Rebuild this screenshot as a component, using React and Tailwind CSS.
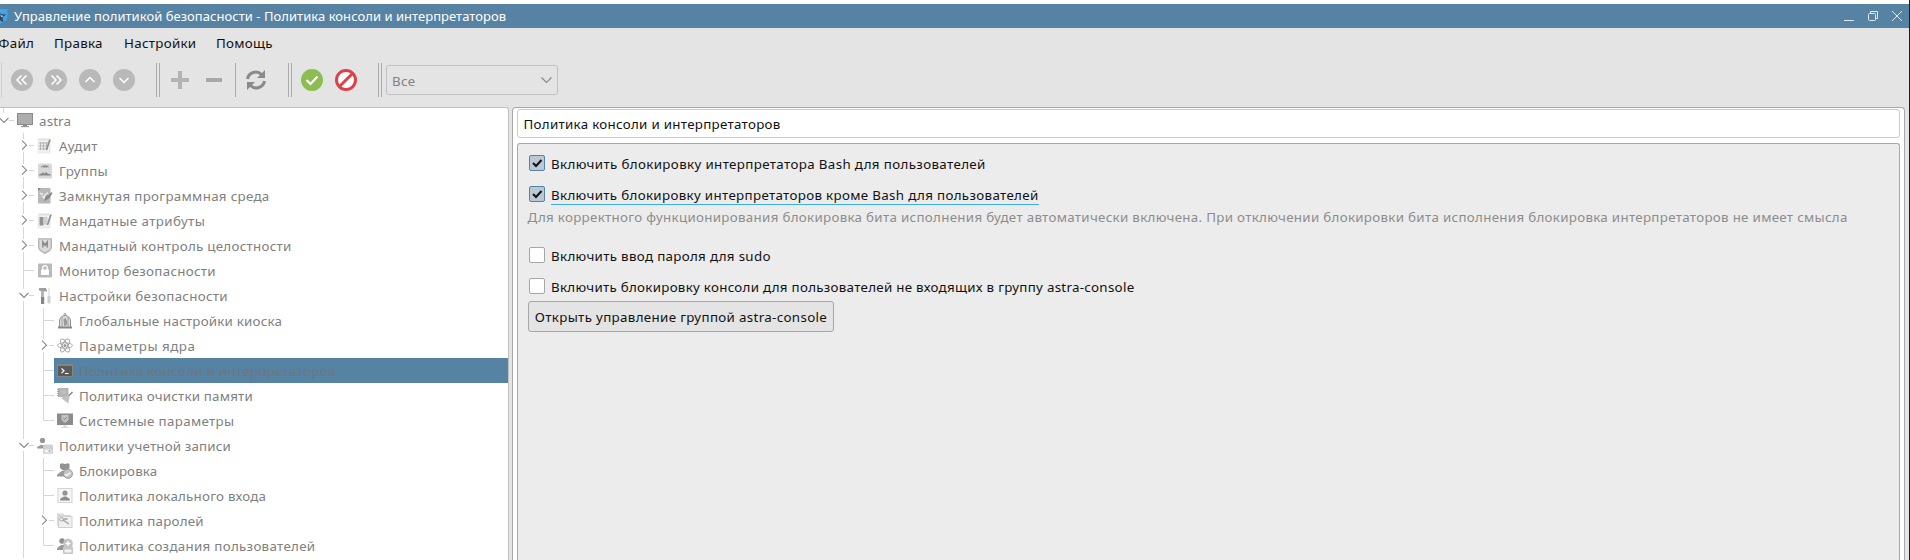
import React from "react";

const I = ({ children }) => (
  <svg width="16" height="16" viewBox="0 0 16 16" className="shrink-0">{children}</svg>
);

const icons = {
  computer: (
    <I><rect x="0" y="0" width="16" height="12" fill="#8a8a8a" /><rect x="1" y="1" width="14" height="10" fill="#adadad" /><rect x="6" y="12" width="4" height="2" fill="#8a8a8a" /><rect x="4" y="13" width="8" height="1.200" fill="#9a9a9a" /></I>
  ),
  audit: (
    <I><rect x="1" y="1" width="12" height="14" rx="1" fill="#f0f0f0" stroke="#e0e0e0" strokeWidth=".6" /><path d="M3 .5v2M5 .5v2M7 .5v2M9 .5v2M11 .5v2" stroke="#d0d0d0" strokeWidth=".8" /><path d="M2 5h9M2 8h9M2 11h7M3.500 4v8M6.500 4v8M9.500 4v7" stroke="#b4b4b4" strokeWidth="1.100" /><path d="M13 1.500L9.500 12" stroke="#8c8c8c" strokeWidth="1.600" /></I>
  ),
  groups: (
    <I><rect x="1" y=".5" width="14" height="15" rx="1.500" fill="#d8d8d8" /><path d="M3.500 4.500c2-3 7-3 9 0l-2-.6-1 1.100-1-1-1.500 1-.8-1z" fill="#8d8d8d" /><path d="M2 12.500c0-1.500 1.300-2 2.300-1.500.700-2 2.500-2 3.200-.3.800-1.900 3-1.600 3.500.3 1.500-.5 2.500.500 3 1.500z" fill="#8a8a8a" /></I>
  ),
  closed: (
    <I><path d="M1 0h12.500v15.500H1z" fill="#b8b8b8" /><path d="M1 0h3L1 3z" fill="#858585" /><path d="M3 5l1.500 1.500L6 5.500M5 8l2 2 1-3 3-2.500" fill="none" stroke="#eee" strokeWidth="1.300" /><path d="M15.500 5l-3 5-5.500 3.500L9 8l3-1 2-3z" fill="#868686" /></I>
  ),
  attrs: (
    <I><rect x="1" y="1" width="12" height="14" rx="1" fill="#f0f0f0" stroke="#e0e0e0" strokeWidth=".6" /><path d="M3 .5v2M5 .5v2M7 .5v2M9 .5v2M11 .5v2" stroke="#d0d0d0" strokeWidth=".8" /><rect x="2.500" y="4" width="4" height="8.500" fill="#939393" /><rect x="6.500" y="4" width="4" height="7.500" fill="#cecece" /><path d="M14 1.500L10.500 12" stroke="#8c8c8c" strokeWidth="1.600" /></I>
  ),
  shield: (
    <I><path d="M1 .2h14V9c0 3.500-4 5.500-7 7-3-1.500-7-3.500-7-7z" fill="#b5b5b5" /><path d="M2.400 1.600h11.200V9c0 2.500-3 4-5.600 5.300C5.400 13 2.400 11.500 2.400 9z" fill="#dadada" /><path d="M5.800 9.500V4L8 7.200 10.200 4v5.500" fill="none" stroke="#858585" strokeWidth="1.400" /></I>
  ),
  lock: (
    <I><rect x="1" y=".5" width="14" height="14" rx="1" fill="#b9b9b9" /><rect x="4" y="6.500" width="8" height="5.500" fill="#fff" /><path d="M5.700 7V5a2.300 2.300 0 0 1 4.600 0V7" fill="none" stroke="#fff" strokeWidth="1.300" /></I>
  ),
  tools: (
    <I><path d="M2 0h7v1.200l1 .3v2H7.200V3H4L2 2.500z" fill="#a0a0a0" /><rect x="4" y="3" width="3" height="7" fill="#b5b5b5" /><rect x="4" y="9" width="3.200" height="7" fill="#868686" /><rect x="11.300" y="0" width="1.400" height="9" fill="#dedede" /><rect x="10.500" y="8" width="3" height="7.500" rx="1.300" fill="#d0d0d0" /></I>
  ),
  kiosk: (
    <I><path d="M2.500 14V8a5.500 5.500 0 0 1 11 0v6" fill="#dcdcdc" stroke="#8f8f8f" /><path d="M5 4v10M11 4v10" stroke="#a0a0a0" /><circle cx="8" cy="1.200" r="1" fill="none" stroke="#8f8f8f" strokeWidth=".8" /><path d="M6.500 6l2-1 1.500 3v4l-3 1z" fill="#999" /><rect x="1" y="13.500" width="14" height="2" fill="#888" /></I>
  ),
  atom: (
    <I><g fill="none" stroke="#a8a8a8" strokeWidth="1"><ellipse cx="8" cy="7.500" rx="7.500" ry="2.700" /><ellipse cx="8" cy="7.500" rx="7.300" ry="2.700" transform="rotate(60 8 7.500)" /><ellipse cx="8" cy="7.500" rx="7.300" ry="2.700" transform="rotate(120 8 7.500)" /></g><circle cx="8" cy="7.500" r="1.500" fill="#999" /></I>
  ),
  terminal: (
    <I><rect x="0" y="1" width="16" height="13" fill="#848484" /><rect x="1" y="3" width="14" height="10" fill="#5a5a5a" /><path d="M4.500 5.500l2.500 2.300-2.500 2.300M8 10.500h3.500" fill="none" stroke="#fff" strokeWidth="1.200" /></I>
  ),
  clean: (
    <I><path d="M1 0h10.500v9H1z" fill="#b4b4b4" /><path d="M0 1.500h2M0 3.500h2M0 5.500h2M0 7.500h2" stroke="#999" strokeWidth=".8" /><path d="M4 3h5M4 5h5" stroke="#cfcfcf" strokeWidth=".8" /><path d="M15.500 4L10.500 9" stroke="#858585" strokeWidth="1.500" /><path d="M4 10l7-3 1.500 2-1 6.500L8 13z" fill="#c2c2c2" /></I>
  ),
  system: (
    <I><rect x="0" y=".5" width="16" height="11.500" fill="#8c8c8c" /><path d="M4.500 2h7v5L8 10 4.500 7z" fill="#c2c2c2" /><path d="M6.300 5.300l1.300 1.300 2.200-2.400" fill="none" stroke="#888" /><path d="M6.500 12h3v2H12v1H4v-1h2.500z" fill="#dcdcdc" /></I>
  ),
  account: (
    <I><circle cx="5.500" cy="2.500" r="2.600" fill="#959595" /><path d="M0 10.500c0-2.500 2.500-2.500 3.700-3.500h3.600c1 .8 2 .8 2.700 1.500v2z" fill="#9a9a9a" /><rect x="6" y="6.500" width="10" height="9.300" rx="1" fill="#d0d0d0" /><rect x="7.500" y="11.500" width="7" height="3" rx="1" fill="#f4f4f4" /><rect x="11.500" y="12" width="2" height="2" fill="#bbb" /></I>
  ),
  block: (
    <I><path d="M3 1l2-.7L8 1l3-.7 1.500.7v4L10 7.500H6L3 5z" fill="#939393" /><path d="M0 13.500C0 10 3 10 4.500 8h6l1 5.500z" fill="#989898" /><circle cx="11" cy="10.800" r="4.500" fill="#c6c6c6" stroke="#9c9c9c" strokeWidth="1" /><path d="M7.500 10.800c2 1.200 4 0 6-2v2c-2 2-4 2.500-5.500 2z" fill="#f4f4f4" /></I>
  ),
  local: (
    <I><rect x="1" y=".5" width="14" height="14" fill="#f6f6f6" stroke="#d4d4d4" /><circle cx="8" cy="5" r="2.600" fill="#949494" /><path d="M3 12.500c0-3 3-3 4-4h2c1 1 4 1 4 4z" fill="#8c8c8c" /></I>
  ),
  passwords: (
    <I><path d="M0 .5h6.500l1 1.500H14v11H0z" fill="#d9d9d9" /><rect x="1.500" y="3.500" width="13.500" height="11" fill="#f0f0f0" stroke="#d0d0d0" /><circle cx="4.500" cy="6.300" r="1.800" fill="none" stroke="#a4a4a4" /><path d="M6 7l6 4M6.500 6h4" stroke="#a0a0a0" strokeWidth="1.400" /></I>
  ),
  create: (
    <I><circle cx="5" cy="3" r="2.700" fill="#8f8f8f" /><path d="M0 12c0-3.500 3-3.500 4-5h5v5z" fill="#999" /><circle cx="11" cy="5.500" r="4.800" fill="#c2c2c2" /><path d="M11 3v5M8.500 5.500h5" stroke="#fff" strokeWidth="1.400" /><rect x="6" y="8.500" width="10" height="7.500" rx="1" fill="#c6c6c6" /><rect x="7.500" y="11.500" width="7" height="3" rx="1" fill="#f4f4f4" /></I>
  ),
};

// One 20px column of tree guides.
function Guide({ kind }) {
  const paths = {
    none: "",
    line: "M9.500 0V25",
    tee: "M9.500 0V25M9.500 12.500H20",
    end: "M9.500 0V12.500H20",
    root: "M9.500 0V5M15 12.500H20",
    open: "M9.500 0V6M9.500 18V25M15 12.500H20",
    closed: "M9.500 0V6M9.500 19V25M15 12.500H20",
  };
  return (
    <svg width="20" height="25" viewBox="0 0 20 25" className="shrink-0">
      <path d={paths[kind]} fill="none" stroke="#d6d6d6" />
      {(kind === "open" || kind === "root") && <path d="M5.500 10l4.500 4.500 4.500-4.500" fill="none" stroke="#888" strokeWidth="1.100" />}
      {kind === "closed" && <path d="M8 7.700l4.500 4.500L8 16.700" fill="none" stroke="#888" strokeWidth="1.100" />}
    </svg>
  );
}

const rows = [
  [["root"], "computer", "astra", "tracking-[.15px]"],
  [["none", "closed"], "audit", "Аудит", "tracking-[.4px]"],
  [["none", "closed"], "groups", "Группы", "tracking-[.3px]"],
  [["none", "closed"], "closed", "Замкнутая программная среда", "tracking-[.31px]"],
  [["none", "closed"], "attrs", "Мандатные атрибуты", "tracking-[.41px]"],
  [["none", "closed"], "shield", "Мандатный контроль целостности", "tracking-[.28px]"],
  [["none", "tee"], "lock", "Монитор безопасности", "tracking-[.3px]"],
  [["none", "open"], "tools", "Настройки безопасности", "tracking-[.31px]"],
  [["none", "line", "tee"], "kiosk", "Глобальные настройки киоска", "tracking-[.22px]"],
  [["none", "line", "closed"], "atom", "Параметры ядра", "tracking-[.5px]"],
  [["none", "line", "tee"], "terminal", "Политика консоли и интерпретаторов", "tracking-[.29px]", true],
  [["none", "line", "tee"], "clean", "Политика очистки памяти", "tracking-[.2px]"],
  [["none", "line", "end"], "system", "Системные параметры", "tracking-[.34px]"],
  [["none", "open"], "account", "Политики учетной записи", "tracking-[.17px]"],
  [["none", "line", "tee"], "block", "Блокировка", "tracking-[.12px]"],
  [["none", "line", "tee"], "local", "Политика локального входа", "tracking-[.24px]"],
  [["none", "line", "closed"], "passwords", "Политика паролей", "tracking-[.25px]"],
  [["none", "line", "end"], "create", "Политика создания пользователей", "tracking-[.3px]"],
];

function Round({ d }) {
  return (
    <svg width="22" height="22" viewBox="0 0 22 22" className="mr-3 shrink-0">
      <circle cx="11" cy="11" r="11" fill="#b9b9b9" />
      <path d={d} fill="none" stroke="#fff" strokeWidth="1.500" />
    </svg>
  );
}

const Double = () => <div className="h-[34px] w-1 shrink-0 border-x border-[#ababab]" />;

function Check({ checked, focus, tracking, children }) {
  return (
    <div className={`flex h-[31px] items-start ${tracking}`}>
      <div className={checked ? "h-4 w-4 shrink-0 rounded-[2px] border border-[#5682a3] bg-[#b9c8d4]" : "h-4 w-4 shrink-0 rounded-[2px] border border-[#a6a6a6] bg-white"}>
        {checked && (
          <svg width="14" height="14" viewBox="0 0 14 14"><path d="M3 7l3 3 5.500-6" fill="none" stroke="#111" strokeWidth="2" /></svg>
        )}
      </div>
      <span className={focus ? "ml-1.5 h-[19px] border-b border-[#3daee9] leading-[18px]" : "ml-1.5 h-[19px] leading-[18px]"}>{children}</span>
    </div>
  );
}

export default function App() {
  return (
    <div className="flex h-[560px] w-[1910px] overflow-hidden bg-white font-['Noto_Sans','Open_Sans',sans-serif] text-[13.33px] leading-5 tracking-[.3px] whitespace-nowrap text-[#111]">
      <div className="flex w-[1909px] flex-col pt-1">
        <header className="flex h-6 shrink-0 items-center bg-[#5682a3] text-white">
          <svg width="8" height="16" viewBox="8 0 8 16" className="mr-1.5 shrink-0">
            <path d="M0 1h15.500v7c0 4-3 6-7.500 8z" fill="#3fa4ee" />
            <path d="M6 3l3 3 5 .5-3.500 3 1 5L6 11z" fill="#34495e" />
            <path d="M8 6l1.500 1.500 2 .5-2 1z" fill="#fff" />
          </svg>
          <span className="text-[13px] leading-6 tracking-[.04px]">Управление политикой безопасности - Политика консоли и интерпретаторов</span>
          <svg width="60" height="12" viewBox="0 0 60 12" className="mr-[6px] ml-auto" fill="none" stroke="#e3e9ee">
            <path d="M1 10.500h10" />
            <rect x="25.500" y="3.500" width="7" height="7" rx="1" />
            <path d="M27.500 3V1.500H34.500V8.500H33" />
            <path d="M49 1l10 10M59 1L49 11" />
          </svg>
        </header>
        <nav className="flex h-8 shrink-0 items-center bg-[#e4e4e4] pb-0.5">
          <span className="-ml-[1.5px] w-[55.5px]">Файл</span>
          <span className="w-[70px]">Правка</span>
          <span className="w-[92px]">Настройки</span>
          <span>Помощь</span>
        </nav>
        <div className="flex h-[47px] shrink-0 items-center bg-[#e4e4e4] pb-[7px] pl-px">
          <div className="mr-[9px] h-[34px] w-px bg-[#cfcfcf]" />
          <Round d="M10.500 6.500L6 11l4.500 4.500M15.500 6.500L11 11l4.500 4.500" />
          <Round d="M6.500 6.500L11 11l-4.500 4.500M11.500 6.500L16 11l-4.500 4.500" />
          <Round d="M6.500 13L11 8.500l4.500 4.500" />
          <Round d="M6.500 9L11 13.500 15.500 9" />
          <div className="w-[9px]" />
          <Double />
          <svg width="18" height="18" viewBox="0 0 18 18" className="ml-[11px]"><path d="M9 0v18M0 9h18" stroke="#b4b4b4" strokeWidth="4" /></svg>
          <svg width="18" height="18" viewBox="0 0 18 18" className="ml-4"><path d="M1 9h16" stroke="#a8a8a8" strokeWidth="4" /></svg>
          <div className="ml-3 h-[34px] w-px bg-[#ababab]" />
          <svg width="22" height="22" viewBox="0 0 22 22" className="ml-[9px]" fill="none" stroke="#8a8a8a" strokeWidth="3">
            <path d="M2.500 10A8.300 8.300 0 0 1 16.500 5.500M19.500 12A8.300 8.300 0 0 1 5.500 16.500" />
            <path d="M20 1v8h-8zM2 21v-8h8z" fill="#8a8a8a" stroke="none" />
          </svg>
          <div className="ml-[21px]"><Double /></div>
          <svg width="22" height="22" viewBox="0 0 22 22" className="ml-[9px]"><circle cx="11" cy="11" r="11" fill="#8bbd50" /><path d="M5.500 11l4 4 7-7.500" fill="none" stroke="#fff" strokeWidth="2.200" /></svg>
          <svg width="22" height="22" viewBox="0 0 22 22" className="ml-3"><circle cx="11" cy="11" r="9.500" fill="#fff" stroke="#dc4148" strokeWidth="3" /><path d="M4.500 17.500l13-13" stroke="#dc4148" strokeWidth="3" /></svg>
          <div className="ml-[21px]"><Double /></div>
          <div className="ml-1 flex h-[30px] w-[172px] items-center justify-between rounded-[3px] border border-[#c2c2c2] pr-[5px] pl-[5px] text-[#838383]">
            <span className="pt-0.5">Все</span>
            <svg width="11" height="7" viewBox="0 0 11 7"><path d="M.500 .500l5 5 5-5" fill="none" stroke="#8a8a8a" strokeWidth="1.200" /></svg>
          </div>
        </div>
        <main className="flex min-h-0 flex-1 bg-[#e4e4e4]">
          <aside className="w-[509px] shrink-0 overflow-hidden rounded-tr-[3px] border-t border-r border-[#c0c0c0] bg-white text-[#808080]">
            {rows.map(([guides, icon, label, tracking, selected]) => (
              <div key={label} className="-ml-1.5 flex h-[25px]">
                {guides.map((g, i) => <Guide key={i} kind={g} />)}
                <div className={selected ? "flex flex-1 items-center gap-1.5 bg-[#5682a3] pl-[3px] text-[#6f777d]" : "flex flex-1 items-center gap-1.5 pl-[3px]"}>
                  {icons[icon]}
                  <span className={`self-start leading-[26px] ${tracking}`}>{label}</span>
                </div>
              </div>
            ))}
          </aside>
          <section className="ml-[3px] flex w-[1393px] flex-col rounded-t-[4px] border border-b-0 border-[#a8a8a8] bg-white px-1 pt-px">
            <div className="flex h-[29px] shrink-0 items-center rounded-[3px] border border-[#cacaca] pt-px pl-[5.5px]">Политика консоли и интерпретаторов</div>
            <div className="mt-[5px] flex-1 rounded-t-[3px] border border-b-0 border-[#a8a8a8] bg-[#ececec] pt-[11px] pl-[11px]">
              <Check checked tracking="tracking-[.37px]">Включить блокировку интерпретатора Bash для пользователей</Check>
              <Check checked focus tracking="tracking-[.34px]">Включить блокировку интерпретаторов кроме Bash для пользователей</Check>
              <p className="-mt-2.5 -ml-[1.5px] h-10 tracking-[.31px] text-[#8c8c8c]">Для корректного функционирования блокировка бита исполнения будет автоматически включена. При отключении блокировки бита исполнения блокировка интерпретаторов не имеет смысла</p>
              <Check tracking="tracking-[.33px]">Включить ввод пароля для sudo</Check>
              <Check tracking="tracking-[.29px]">Включить блокировку консоли для пользователей не входящих в группу astra-console</Check>
              <button className="-mt-2 -ml-px block h-[31px] w-[306px] rounded-[3px] border border-[#a6a6a6] bg-[#e4e4e4] pt-px tracking-[.34px]">Открыть управление группой astra-console</button>
            </div>
          </section>
        </main>
      </div>
      <div className="w-px bg-[#1c1c1c]" />
    </div>
  );
}
